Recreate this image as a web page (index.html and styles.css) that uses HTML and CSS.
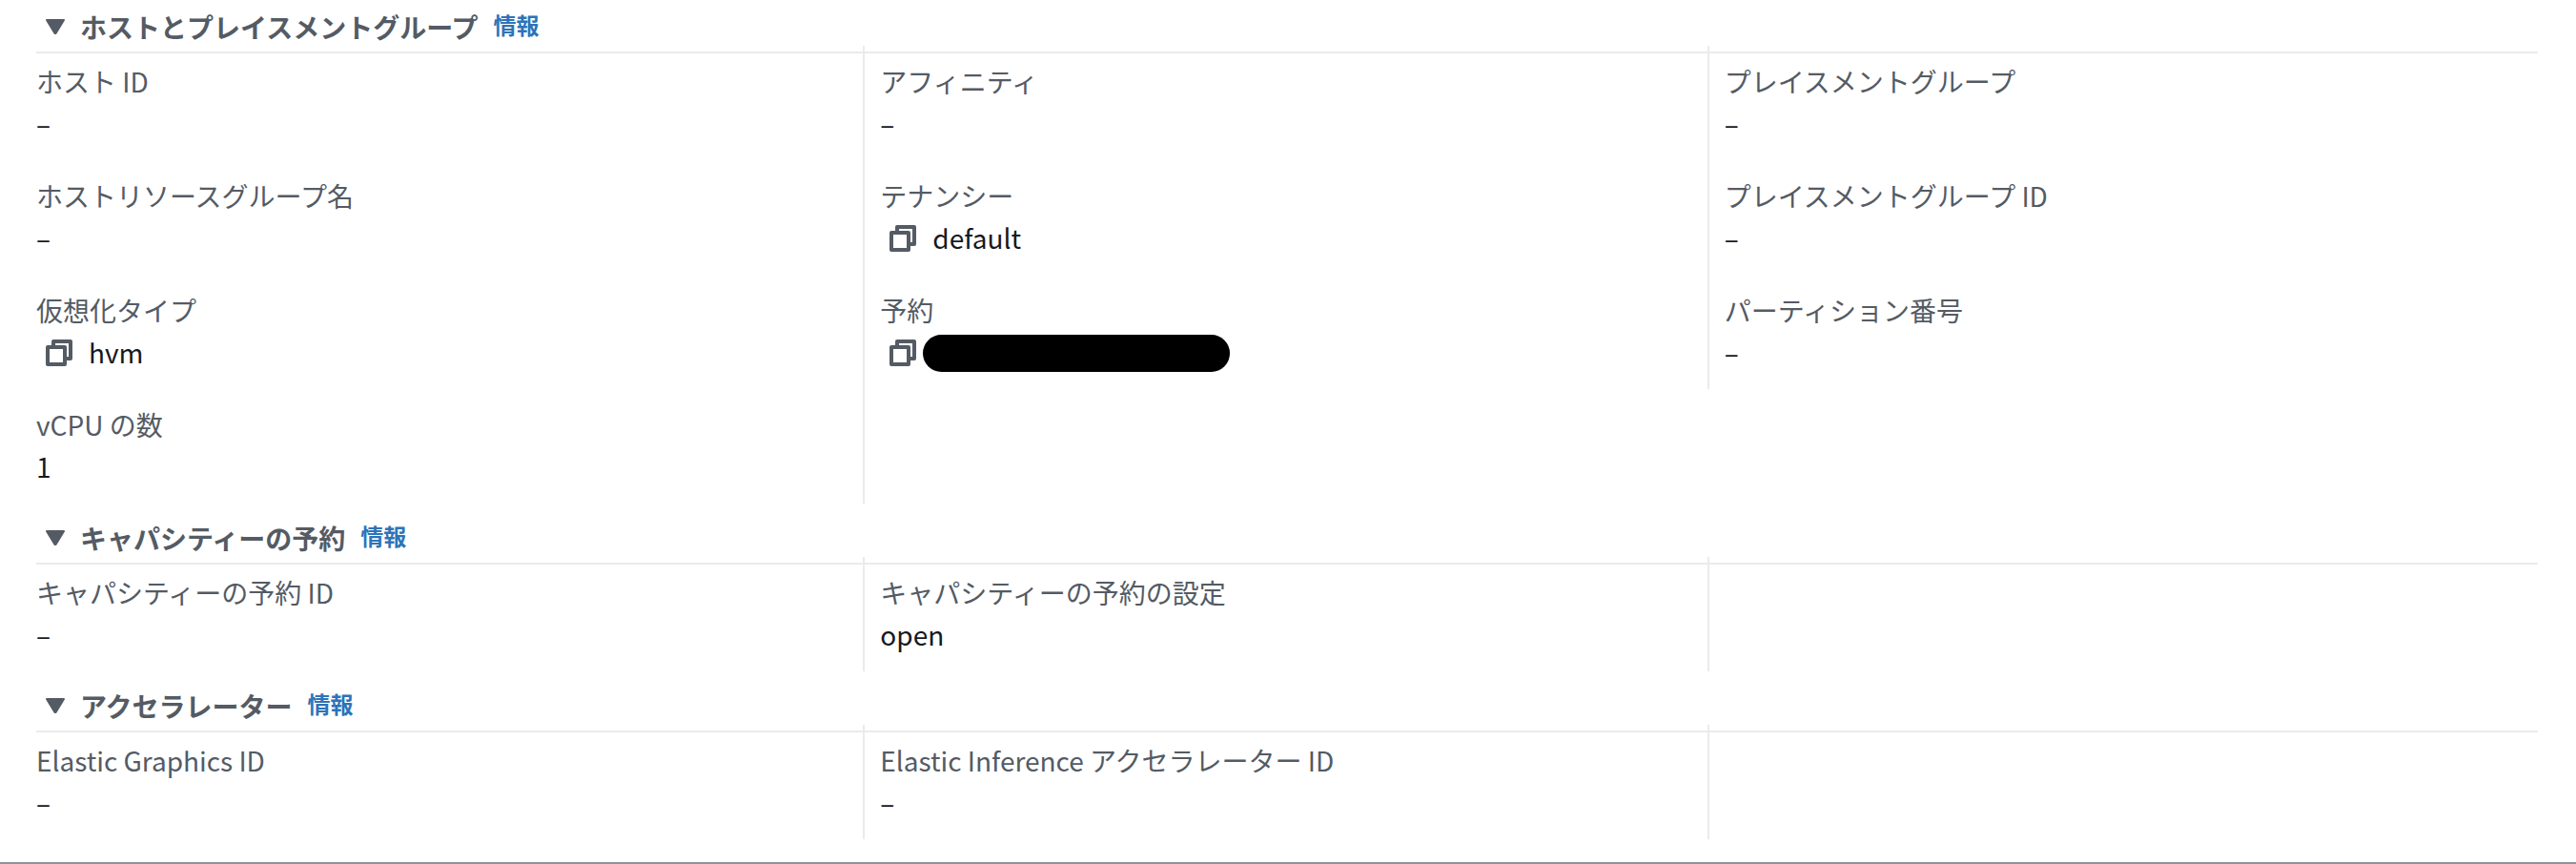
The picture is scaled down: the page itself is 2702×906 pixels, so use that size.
FILE: index.html
```html
<!DOCTYPE html>
<html lang="ja">
<head>
<meta charset="utf-8">
<meta name="viewport" content="width=device-width, initial-scale=1">
<title>インスタンスの詳細</title>
<link rel="stylesheet" href="styles.css">
</head>
<body>
<svg class="sprite" aria-hidden="true">
  <symbol id="caret" viewBox="0 0 20 16"><path d="M1 1H19L10.500 15H9.500Z" fill="currentColor" stroke="currentColor" stroke-width="2" stroke-linejoin="round"/></symbol>
  <symbol id="copy" viewBox="0 0 28 28"><g fill="none" stroke="currentColor" stroke-width="4" stroke-linejoin="round"><path d="M2 8H20V26H2Z"/><path d="M8 7V2H26V20H21"/></g></symbol>
</svg>
<main class="panel">
  <section class="group">
    <header class="group-head">
      <h2 class="group-title"><button class="toggle" type="button" aria-expanded="true"><svg class="caret" aria-hidden="true"><use href="#caret"/></svg>ホストとプレイスメントグループ</button></h2>
      <a class="info" href="#host">情報</a>
    </header>
    <div class="columns">
      <dl class="column">
        <div class="item"><dt>ホスト ID</dt><dd>–</dd></div>
        <div class="item"><dt>ホストリソースグループ名</dt><dd>–</dd></div>
        <div class="item"><dt>仮想化タイプ</dt><dd><button class="copy" type="button" aria-label="コピー"><svg class="copy-icon" aria-hidden="true"><use href="#copy"/></svg></button><span class="copied">hvm</span></dd></div>
        <div class="item"><dt>vCPU の数</dt><dd>1</dd></div>
      </dl>
      <dl class="column">
        <div class="item"><dt>アフィニティ</dt><dd>–</dd></div>
        <div class="item"><dt>テナンシー</dt><dd><button class="copy" type="button" aria-label="コピー"><svg class="copy-icon" aria-hidden="true"><use href="#copy"/></svg></button><span class="copied">default</span></dd></div>
        <div class="item"><dt>予約</dt><dd><button class="copy" type="button" aria-label="コピー"><svg class="copy-icon" aria-hidden="true"><use href="#copy"/></svg></button><span class="masked"></span></dd></div>
        <div class="item"></div>
      </dl>
      <dl class="column">
        <div class="item"><dt>プレイスメントグループ</dt><dd>–</dd></div>
        <div class="item"><dt>プレイスメントグループ ID</dt><dd>–</dd></div>
        <div class="item"><dt>パーティション番号</dt><dd>–</dd></div>
      </dl>
    </div>
  </section>
  <section class="group">
    <header class="group-head">
      <h2 class="group-title"><button class="toggle" type="button" aria-expanded="true"><svg class="caret" aria-hidden="true"><use href="#caret"/></svg>キャパシティーの予約</button></h2>
      <a class="info" href="#capacity">情報</a>
    </header>
    <div class="columns">
      <dl class="column">
        <div class="item"><dt>キャパシティーの予約 ID</dt><dd>–</dd></div>
      </dl>
      <dl class="column">
        <div class="item"><dt>キャパシティーの予約の設定</dt><dd>open</dd></div>
      </dl>
      <dl class="column"><div class="item"></div></dl>
    </div>
  </section>
  <section class="group">
    <header class="group-head">
      <h2 class="group-title"><button class="toggle" type="button" aria-expanded="true"><svg class="caret" aria-hidden="true"><use href="#caret"/></svg>アクセラレーター</button></h2>
      <a class="info" href="#accelerator">情報</a>
    </header>
    <div class="columns">
      <dl class="column">
        <div class="item"><dt>Elastic Graphics ID</dt><dd>–</dd></div>
      </dl>
      <dl class="column">
        <div class="item"><dt>Elastic Inference アクセラレーター ID</dt><dd>–</dd></div>
      </dl>
      <dl class="column"><div class="item"></div></dl>
    </div>
  </section>
</main>
</body>
</html>
```
FILE: styles.css
```css
* { box-sizing: border-box; }

body {
  margin: 0;
  background: #fff;
  color: #16191f;
  font-family: "Noto Sans CJK JP", sans-serif;
  font-size: 28px;
  line-height: 44px;
}

button {
  margin: 0;
  padding: 0;
  border: 0;
  background: none;
  color: #545b64;
  font: inherit;
  cursor: pointer;
}

.sprite { display: none; }

.panel {
  display: flex;
  flex-direction: column;
  gap: 8px;
  padding: 0 26px 24px 20px;
  border-bottom: 2px solid #8c949c;
}

.group-head {
  display: flex;
  align-items: baseline;
  gap: 16px;
  height: 56px;
  margin: 0 14px 0 18px;
  padding: 4px 0 0 10px;
  border-bottom: 2px solid #ebebeb;
}

.group-title {
  margin: 0;
  font-size: 28px;
  font-weight: 700;
}

.toggle {
  display: flex;
  align-items: center;
  gap: 16px;
}

.caret { width: 20px; height: 16px; }

.info {
  color: #2e73b8;
  font-size: 24px;
  font-weight: 700;
  text-decoration: none;
}

.columns {
  display: grid;
  grid-template-columns: repeat(3, 1fr);
  align-items: start;
  margin-top: -8px;
}

.column {
  margin: 0;
  padding-left: 18px;
}

.column + .column {
  padding-left: 16px;
  border-left: 2px solid #ebebeb;
}

.item {
  min-height: 120px;
  padding: 15px 0 17px;
}

dt { color: #545b64; }

dd {
  display: flex;
  align-items: flex-start;
  min-height: 44px;
  margin: 0;
}

.copy {
  display: flex;
  padding: 9px 7px 0 10px;
}

.copy-icon { width: 28px; height: 28px; }

.copied { padding-left: 10px; }

.masked {
  width: 322px;
  height: 39px;
  margin-top: 4px;
  border-radius: 20px;
  background: #000;
}
```
